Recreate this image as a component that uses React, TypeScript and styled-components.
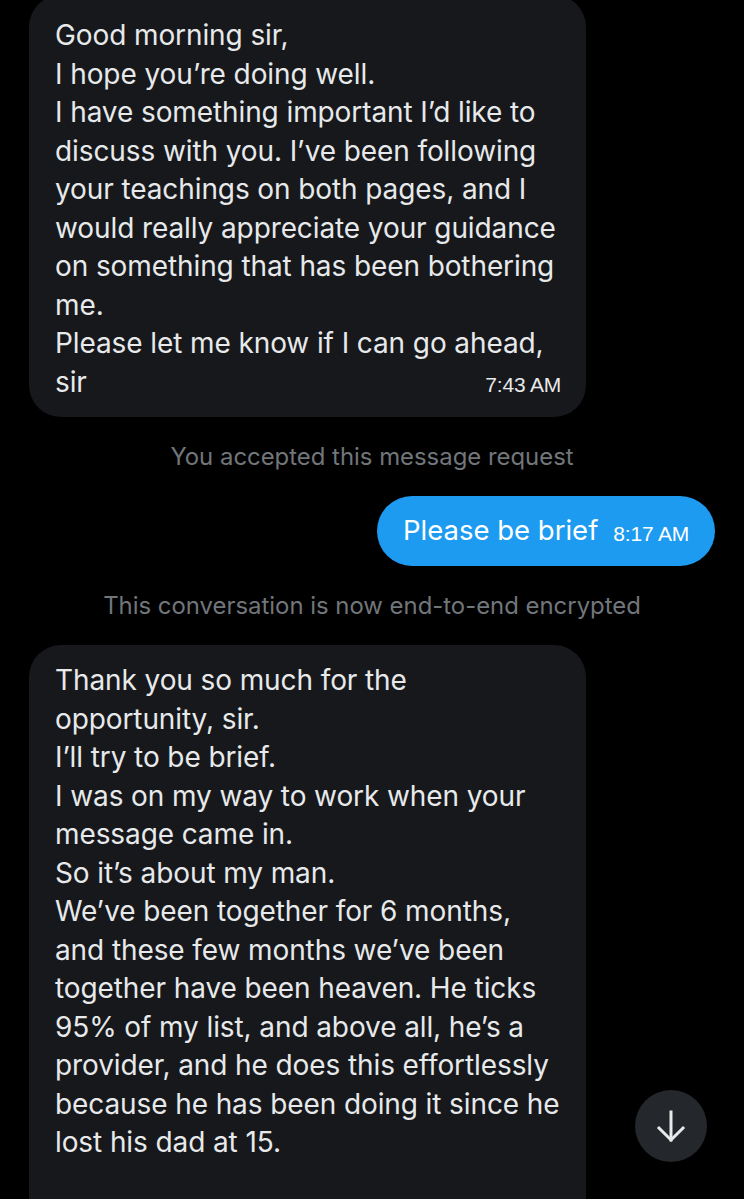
import React from "react";
import styled, { createGlobalStyle } from "styled-components";

const Global = createGlobalStyle`
  html, body { margin: 0; padding: 0; background: #000; }
  body { width: 744px; height: 1199px; overflow: hidden; }
  #root { width: 744px; height: 1199px; }
`;

const Screen = styled.div`
  position: relative;
  width: 744px;
  height: 1199px;
  overflow: hidden;
  background: #000;
  display: flex;
  flex-direction: column;
  font-family: "Inter", "Noto Sans", sans-serif;
  color: #e7e9ea;
`;

const Bubble = styled.div<{ $top: number; $topPad: number; $bottomPad: number }>`
  margin: ${(p) => p.$top}px 0 0 29px;
  width: 557px;
  box-sizing: border-box;
  background: #16181c;
  border-radius: 32px;
  padding: ${(p) => p.$topPad}px 25px ${(p) => p.$bottomPad}px 26px;
  font-size: 28px;
  line-height: 38.5px;
  letter-spacing: -0.1px;
`;

const Lines = styled.div`
  white-space: pre;
`;

const LastRow = styled.div`
  display: flex;
  justify-content: space-between;
  align-items: baseline;
  white-space: pre;
`;

const Time = styled.span`
  font-family: "Liberation Sans", Arial, sans-serif;
  font-size: 21px;
  color: #e7e9ea;
  letter-spacing: -0.2px;
`;

const SystemNote = styled.div`
  text-align: center;
  color: #71767b;
  font-size: 23.9px;
  line-height: 30px;
  margin: 25px 0 24px;
`;

const OutRow = styled.div`
  display: flex;
  justify-content: flex-end;
  padding-right: 29px;
`;

const OutBubble = styled.div`
  display: flex;
  align-items: center;
  gap: 15px;
  background: #1d9bf0;
  color: #fff;
  border-radius: 35px;
  height: 70px;
  box-sizing: border-box;
  padding: 0 26px;
  font-size: 27.5px;
`;

const OutText = styled.span`
  line-height: 1;
`;

const OutTime = styled(Time)`
  color: #fff;
  font-size: 21px;
  margin-top: 5px;
`;

const ScrollButton = styled.div`
  position: absolute;
  left: 635px;
  top: 1090px;
  width: 72px;
  height: 72px;
  border-radius: 50%;
  background: #24272b;
  display: flex;
  align-items: center;
  justify-content: center;
`;

const first = `Good morning sir,
I hope you’re doing well.
I have something important I’d like to
discuss with you. I’ve been following
your teachings on both pages, and I
would really appreciate your guidance
on something that has been bothering
me.
Please let me know if I can go ahead,`;

const second = `Thank you so much for the
opportunity, sir.
I’ll try to be brief.
I was on my way to work when your
message came in.
So it’s about my man.
We’ve been together for 6 months,
and these few months we’ve been
together have been heaven. He ticks
95% of my list, and above all, he’s a
provider, and he does this effortlessly
because he has been doing it since he
lost his dad at 15.`;

export default function App() {
  return (
    <Screen>
      <Global />
      <Bubble $top={-5} $topPad={21} $bottomPad={13}>
        <Lines>{first}</Lines>
        <LastRow>
          <span>sir</span>
          <Time>7:43 AM</Time>
        </LastRow>
      </Bubble>
      <SystemNote>You accepted this message request</SystemNote>
      <OutRow>
        <OutBubble>
          <OutText>Please be brief</OutText>
          <OutTime>8:17 AM</OutTime>
        </OutBubble>
      </OutRow>
      <SystemNote>This conversation is now end-to-end encrypted</SystemNote>
      <Bubble $top={0} $topPad={16} $bottomPad={120}>
        <Lines>{second}</Lines>
      </Bubble>
      <ScrollButton>
        <svg width="30" height="34" viewBox="0 0 30 34" fill="none" stroke="#e7e9ea" strokeWidth="3" strokeLinecap="square">
          <path d="M15 3 V31" />
          <path d="M3 19 L15 31 L27 19" />
        </svg>
      </ScrollButton>
    </Screen>
  );
}
